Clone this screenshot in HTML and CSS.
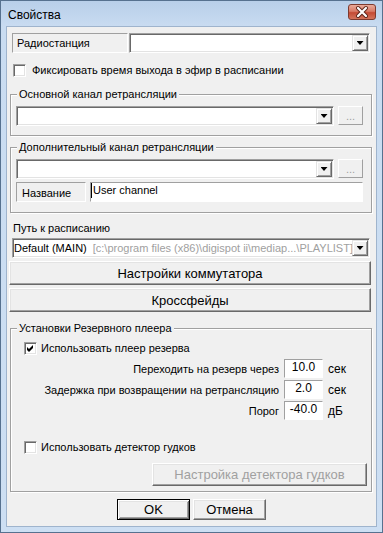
FILE: index.html
```html
<!DOCTYPE html>
<html lang="ru">
<head>
    <meta charset="UTF-8">
    <meta name="viewport" content="width=device-width, initial-scale=1.0">
    <title>Свойства</title>
    <link rel="stylesheet" href="styles.css">
</head>
<body>
    <div class="window">
        <div class="titlebar">
            <span class="title">Свойства</span>
            <span class="close">
                <svg width="26" height="14" viewBox="0 0 26 14">
                    <path d="M9 3 L17 11 M17 3 L9 11" stroke="#5a2218" stroke-width="4" stroke-linecap="round"/>
                    <path d="M9 3 L17 11 M17 3 L9 11" stroke="#fff" stroke-width="2.2" stroke-linecap="round"/>
                </svg>
            </span>
        </div>
        <div class="client">
            <div class="row station-row">
                <div class="caption caption-station">Радиостанция</div>
                <div class="combo combo-station"><span class="combo-text"></span><span class="drop"></span></div>
            </div>

            <div class="check check-fix"><span class="box"></span>Фиксировать время выхода в эфир в расписании</div>

            <fieldset class="group group-main">
                <legend>Основной канал ретрансляции</legend>
                <div class="row">
                    <div class="combo combo-channel"><span class="combo-text"></span><span class="drop"></span></div>
                    <button class="btn btn-dots" disabled>...</button>
                </div>
            </fieldset>

            <fieldset class="group group-extra">
                <legend>Дополнительный канал ретрансляции</legend>
                <div class="row">
                    <div class="combo combo-channel"><span class="combo-text"></span><span class="drop"></span></div>
                    <button class="btn btn-dots" disabled>...</button>
                </div>
                <div class="row name-row">
                    <div class="caption caption-name">Название</div>
                    <div class="field"><span class="caret"></span>User channel</div>
                </div>
            </fieldset>

            <div class="path-label">Путь к расписанию</div>
            <div class="combo combo-path">
                <span class="combo-text">Default (MAIN)<span class="path-dim">[c:\program files (x86)\digispot ii\mediap...\PLAYLIST]</span></span>
                <span class="drop"></span>
            </div>

            <button class="btn btn-wide">Настройки коммутатора</button>
            <button class="btn btn-wide">Кроссфейды</button>

            <fieldset class="group group-reserve">
                <legend>Установки Резервного плеера</legend>
                <div class="check check-inner">
                    <span class="box">
                        <svg width="11" height="11" viewBox="0 0 11 11"><path d="M2 4 L4 6 L8 2 L8 5 L4 9 L2 7 Z" fill="#000"/></svg>
                    </span>Использовать плеер резерва
                </div>
                <div class="param param-first">
                    <span class="param-label">Переходить на резерв через</span>
                    <span class="param-value">10.0</span>
                    <span class="param-unit">сек</span>
                </div>
                <div class="param">
                    <span class="param-label">Задержка при возвращении на ретрансляцию</span>
                    <span class="param-value">2.0</span>
                    <span class="param-unit">сек</span>
                </div>
                <div class="param">
                    <span class="param-label">Порог</span>
                    <span class="param-value">-40.0</span>
                    <span class="param-unit">дБ</span>
                </div>
                <div class="check check-inner check-beep"><span class="box"></span>Использовать детектор гудков</div>
                <button class="btn btn-beep" disabled>Настройка детектора гудков</button>
            </fieldset>

            <div class="dialog-buttons">
                <button class="btn btn-dialog btn-default">OK</button>
                <button class="btn btn-dialog">Отмена</button>
            </div>
        </div>
    </div>
</body>
</html>
```
FILE: styles.css
```css
body {
    margin: 0;
    font-family: "Liberation Sans", Arial, sans-serif;
    font-size: 11px;
    color: #000;
    background: #fff;
}
.window {
    width: 383px;
    height: 533px;
    box-sizing: border-box;
    border: 1px solid #56718f;
    background: linear-gradient(to bottom, #b8cfe9 0, #c9dcf1 26px, #cddff3 100%);
    padding: 0 5px 5px;
    display: flex;
    flex-direction: column;
}
.titlebar {
    height: 25px;
    display: flex;
    justify-content: space-between;
    align-items: flex-start;
}
.title {
    margin: 7px 0 0 2px;
    font-size: 12px;
    line-height: 14px;
}
.close {
    margin: 3px 1px 0 0;
    width: 28px;
    height: 16px;
    box-sizing: border-box;
    border: 1px solid #7e3a2e;
    border-radius: 3px;
    background: linear-gradient(to bottom, #e9aa9a 0, #d87a66 45%, #c44a34 55%, #d4745c 100%);
    display: flex;
    align-items: center;
    justify-content: center;
}
.client {
    flex: 1;
    background: #f0f0f0;
    border: 1px solid #9fb4cd;
}
.row {
    display: flex;
}
.station-row {
    margin: 6px 0 0 5px;
    gap: 1px;
}
.caption {
    box-sizing: border-box;
    height: 20px;
    border: 1px solid;
    border-color: #a0a0a0 #fff #fff #a0a0a0;
    line-height: 18px;
    white-space: nowrap;
}
.caption-station {
    width: 116px;
    padding-left: 4px;
}
.caption-name {
    width: 70px;
    padding-left: 5px;
    line-height: 20px;
}
.combo {
    height: 20px;
    box-sizing: border-box;
    background: #fff;
    border: 1px solid;
    border-color: #a0a0a0 #fff #fff #a0a0a0;
    box-shadow: inset 1px 1px 0 #696969, inset -1px -1px 0 #e3e3e3;
    padding: 1px 1px 1px 2px;
    display: flex;
    align-items: center;
}
.combo-station {
    width: 241px;
}
.combo-text {
    flex: 1;
    white-space: nowrap;
    overflow: hidden;
    line-height: 16px;
}
.drop {
    width: 16px;
    height: 16px;
    box-sizing: border-box;
    background: #f0f0f0;
    border: 1px solid;
    border-color: #e3e3e3 #696969 #696969 #e3e3e3;
    box-shadow: inset 1px 1px 0 #fff, inset -1px -1px 0 #a0a0a0;
    display: flex;
    align-items: center;
    justify-content: center;
    flex-shrink: 0;
}
.drop::after {
    content: "";
    width: 7px;
    height: 4px;
    background: #000;
    clip-path: polygon(0 0, 100% 0, 50% 100%);
}
.check {
    display: flex;
    align-items: center;
    height: 13px;
    line-height: 13px;
    white-space: nowrap;
}
.box {
    width: 13px;
    height: 13px;
    box-sizing: border-box;
    background: #fff;
    border: 1px solid;
    border-color: #a0a0a0 #fff #fff #a0a0a0;
    box-shadow: inset 1px 1px 0 #696969, inset -1px -1px 0 #e3e3e3;
    display: flex;
    flex-shrink: 0;
}
.check-fix {
    margin: 11px 0 0 6px;
    gap: 6px;
}
.group {
    margin: 0 0 0 3px;
    width: 362px;
    box-sizing: border-box;
    min-width: 0;
    border: 1px solid #a0a0a0;
    box-shadow: inset 1px 1px 0 #fff, 1px 1px 0 #fff;
    padding: 5px 8px 9px 5px;
}
.group legend {
    padding: 0 2px;
    margin-left: 1px;
    line-height: 14px;
    background: #f0f0f0;
}
.group-main {
    margin-top: 10px;
}
.group-main .row,
.group-extra .row {
    gap: 4px;
}
.combo-channel {
    flex: 1;
}
.group-extra {
    margin-top: 4px;
    padding-bottom: 10px;
}
.name-row {
    margin-top: 3px;
}
.field {
    flex: 1;
    height: 20px;
    box-sizing: border-box;
    background: #fff;
    border: 1px solid;
    border-color: #a0a0a0 #fff #fff #a0a0a0;
    line-height: 14px;
    display: flex;
    align-items: flex-start;
}
.caret {
    width: 1px;
    height: 15px;
    background: #000;
    margin-right: 1px;
}
.btn {
    box-sizing: border-box;
    background: #f0f0f0;
    border: 1px solid;
    border-color: #fff #696969 #696969 #fff;
    box-shadow: inset -1px -1px 0 #a0a0a0, inset 1px 1px 0 #e3e3e3;
    font-family: "Liberation Sans", Arial, sans-serif;
    font-size: 13px;
    color: #000;
    padding: 0;
    display: block;
}
.btn:disabled {
    color: #a0a0a0;
}
.btn-dots {
    width: 25px;
    height: 19px;
    font-size: 11px;
    border-color: #fff #a0a0a0 #a0a0a0 #fff;
    box-shadow: none;
    line-height: 14px;
}
.path-label {
    margin: 8px 0 0 6px;
    line-height: 14px;
}
.combo-path {
    margin: 3px 0 0 5px;
    width: 358px;
    padding-left: 1px;
}
.path-dim {
    color: #a0a0a0;
    margin-left: 6px;
}
.btn-wide {
    margin: 3px 0 0 2px;
    width: 362px;
    height: 24px;
}
.group-reserve {
    margin-top: 9px;
    padding: 7px 4px 5px 5px;
    display: flex;
    flex-direction: column;
}
.check-inner {
    margin-left: 8px;
    gap: 4px;
}
.check-inner .box {
    align-items: center;
    justify-content: center;
}
.param {
    display: grid;
    grid-template-columns: 1fr 39px 39px;
    column-gap: 5px;
    align-items: center;
    margin-top: 2px;
    height: 19px;
}
.param-first {
    margin-top: 4px;
}
.param-label {
    text-align: right;
    white-space: nowrap;
}
.param-value {
    height: 19px;
    box-sizing: border-box;
    background: #fff;
    border: 1px solid;
    border-color: #a0a0a0 #fff #fff #a0a0a0;
    text-align: center;
    font-size: 12px;
    line-height: 15px;
}
.param-unit {
    font-size: 12px;
}
.check-beep {
    margin-top: 21px;
}
.btn-beep {
    align-self: flex-end;
    margin-top: 9px;
    width: 215px;
    height: 23px;
}
.dialog-buttons {
    display: flex;
    justify-content: center;
    gap: 3px;
    margin-top: 7px;
}
.btn-dialog {
    width: 73px;
    height: 21px;
}
.btn-default {
    border-color: #000;
    box-shadow: inset 1px 1px 0 #fff, inset -1px -1px 0 #696969, inset 2px 2px 0 #e3e3e3, inset -2px -2px 0 #a0a0a0;
}
```
